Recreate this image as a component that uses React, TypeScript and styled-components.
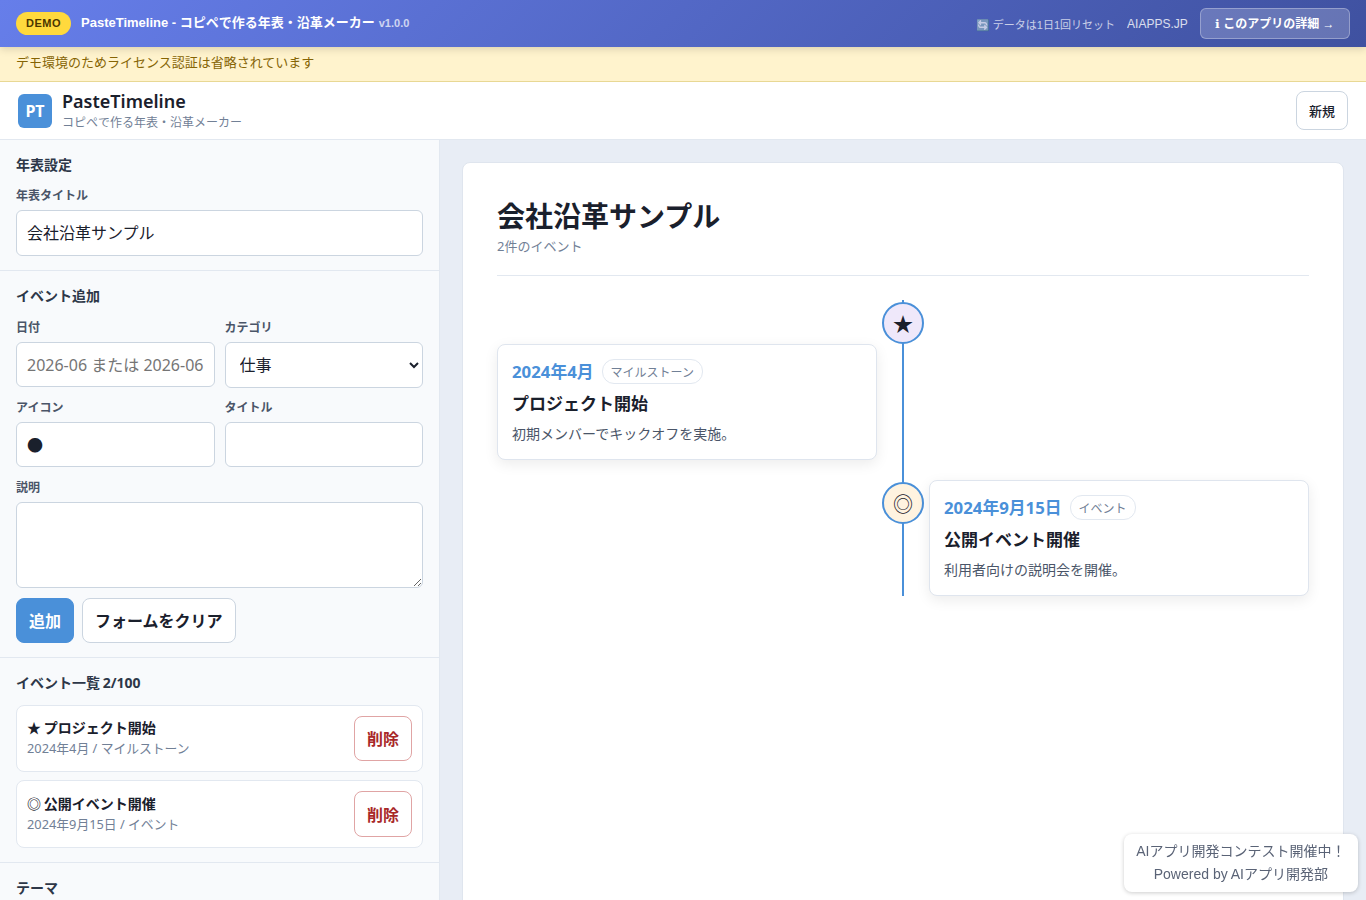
import { createGlobalStyle, styled } from "styled-components";

const APP_FONT = `"Noto Sans", "Noto Sans CJK JP", sans-serif`;
const DEMO_FONT = `"Liberation Sans", "Noto Sans CJK JP", sans-serif`;

const Global = createGlobalStyle`
  * { box-sizing: border-box; }
  html, body { margin: 0; height: 100%; overflow: hidden; }
  body {
    font-family: ${APP_FONT};
    color: #1a202c;
    background: #e8edf5;
  }
`;

const S = {
  Page: styled.div`
    height: 900px;
    display: flex;
    flex-direction: column;
    overflow: hidden;
  `,
  DemoBar: styled.div`
    height: 47px;
    flex: none;
    display: flex;
    align-items: center;
    justify-content: space-between;
    padding: 0 16px;
    font-family: ${DEMO_FONT};
    color: #fff;
    background: linear-gradient(135deg, #667eea 0%, #3f51a0 100%);
    box-shadow: 0 2px 8px rgba(0, 0, 0, 0.15);
    position: relative;
  `,
  DemoLeft: styled.div`
    display: flex;
    align-items: center;
    gap: 10px;
  `,
  DemoBadge: styled.span`
    display: block;
    background: #ffd93d;
    color: #4a3500;
    font-size: 11px;
    font-weight: 700;
    line-height: 13px;
    padding: 5px 10px;
    border-radius: 12px;
    letter-spacing: 0.5px;
  `,
  DemoTitle: styled.span`
    padding-bottom: 5px;
    font-size: 13px;
    font-weight: 600;
  `,
  DemoVersion: styled.span`
    font-size: 11px;
    font-weight: 600;
    opacity: 0.7;
    margin-left: 4px;
  `,
  DemoRight: styled.div`
    display: flex;
    align-items: center;
    gap: 12px;
  `,
  DemoNote: styled.span`
    font-size: 11px;
    opacity: 0.7;
  `,
  DemoLink: styled.a`
    font-size: 12px;
    color: #fff;
    opacity: 0.8;
  `,
  DemoButton: styled.a`
    display: block;
    font-size: 12px;
    font-weight: 600;
    line-height: 17px;
    color: #fff;
    padding: 7px 14.5px 5px;
    border-radius: 6px;
    background: rgba(255, 255, 255, 0.2);
    border: 1px solid rgba(255, 255, 255, 0.3);
  `,
  InfoGlyph: styled.span`
    font-family: "DejaVu Sans", sans-serif;
  `,
  Notice: styled.div`
    height: 35px;
    flex: none;
    padding: 5px 16px 0;
    font-size: 13px;
    color: #856404;
    background: #fff3cd;
    border-bottom: 1px solid #e8d894;
  `,
  Header: styled.header`
    height: 58px;
    flex: none;
    display: flex;
    align-items: center;
    justify-content: space-between;
    padding: 0 18px;
    background: #fff;
    border-bottom: 1px solid #e2e8f0;
  `,
  Brand: styled.div`
    display: flex;
    align-items: center;
    gap: 10px;
  `,
  Logo: styled.div`
    width: 34px;
    height: 34px;
    border-radius: 6px;
    background: #4a90d9;
    color: #fff;
    font-weight: 700;
    font-size: 16px;
    display: flex;
    align-items: center;
    justify-content: center;
  `,
  BrandText: styled.div`
    padding-top: 2px;
  `,
  BrandName: styled.div`
    font-size: 18px;
    font-weight: 600;
    line-height: 22px;
  `,
  BrandSub: styled.div`
    margin-top: 1px;
    font-size: 12px;
    line-height: 20px;
    color: #718096;
  `,
  NewButton: styled.button`
    height: 39px;
    padding: 0 12px;
    font: 500 13px ${APP_FONT};
    color: #1a202c;
    background: #fff;
    border: 1px solid #cbd5e0;
    border-radius: 8px;
  `,
  Body: styled.div`
    flex: 1;
    min-height: 0;
    display: flex;
  `,
  Sidebar: styled.aside`
    width: 440px;
    flex: none;
    background: #f8fafc;
    border-right: 1px solid #e2e8f0;
    overflow: hidden;
  `,
  Section: styled.section`
    padding: 16px 16px 14px;
    border-bottom: 1px solid #e2e8f0;
  `,
  SectionTitle: styled.h2`
    margin: 0 0 13px;
    font-size: 14px;
    font-weight: 700;
    line-height: 18px;
    word-spacing: -1px;
    color: #2d3748;
  `,
  Grid: styled.div`
    display: grid;
    grid-template-columns: 1fr 1fr;
    gap: 12px 10px;
    padding-top: 0.5px;
  `,
  Field: styled.label<{ $full?: boolean }>`
    display: block;
    min-width: 0;
    grid-column: ${(p) => (p.$full ? "1 / -1" : "auto")};
  `,
  Label: styled.span`
    display: block;
    margin-bottom: 5px;
    font-size: 12px;
    font-weight: 600;
    line-height: 18px;
    color: #4a5568;
  `,
  Input: styled.input<{ $tall?: boolean; $pad?: string }>`
    display: block;
    width: 100%;
    height: ${(p) => (p.$tall ? "46px" : "45px")};
    padding: ${(p) => p.$pad ?? "1px 10px 0"};
    font: 16px ${APP_FONT};
    color: #1a202c;
    background: #fff;
    border: 1px solid #cbd5e0;
    border-radius: 6px;
    &::placeholder { color: #757575; }
  `,
  Select: styled.select`
    display: block;
    width: 100%;
    height: 46px;
    margin-bottom: -1px;
    padding: 0 10px;
    font: 16px ${APP_FONT};
    color: #1a202c;
    background: #fff;
    border: 1px solid #cbd5e0;
    border-radius: 6px;
  `,
  TextArea: styled.textarea`
    display: block;
    width: 100%;
    height: 86px;
    padding: 10px;
    font: 16px ${APP_FONT};
    background: #fff;
    border: 1px solid #cbd5e0;
    border-radius: 6px;
  `,
  Actions: styled.div`
    display: flex;
    gap: 8px;
    margin-top: 10px;
  `,
  Button: styled.button<{ $primary?: boolean }>`
    height: 45px;
    padding: 0 12px;
    font: 600 16px ${APP_FONT};
    color: ${(p) => (p.$primary ? "#fff" : "#1a202c")};
    background: ${(p) => (p.$primary ? "#4a90d9" : "#fff")};
    border: 1px solid ${(p) => (p.$primary ? "#4a90d9" : "#cbd5e0")};
    border-radius: 8px;
  `,
  EventList: styled.div`
    display: flex;
    flex-direction: column;
    gap: 8px;
  `,
  EventRow: styled.div`
    display: flex;
    align-items: center;
    justify-content: space-between;
    padding: 10px;
    background: #fff;
    border: 1px solid #e2e8f0;
    border-radius: 8px;
  `,
  EventName: styled.div`
    font-size: 14px;
    font-weight: 600;
    line-height: 20px;
    word-spacing: -1px;
  `,
  EventMeta: styled.div`
    font-size: 12.8px;
    line-height: 20px;
    color: #718096;
  `,
  DeleteButton: styled.button`
    height: 45.5px;
    padding: 0 12px;
    font: 600 16px ${APP_FONT};
    color: #a82828;
    background: #fff;
    border: 1px solid #e0a4a4;
    border-radius: 8px;
  `,
  Main: styled.main`
    flex: 1;
    min-width: 0;
    padding: 22px 22px 0;
  `,
  Canvas: styled.div`
    min-height: 900px;
    padding: 34px;
    background: #fff;
    border: 1px solid #dfe5ee;
    border-radius: 8px;
  `,
  CanvasTitle: styled.h1`
    margin: 1px 0 0;
    font-size: 28px;
    font-weight: 700;
    line-height: 36px;
    color: #1a202c;
  `,
  CanvasCount: styled.div`
    margin-top: 3px;
    padding-bottom: 19px;
    font-size: 13px;
    line-height: 19px;
    color: #718096;
    border-bottom: 1px solid #e2e8f0;
  `,
  Timeline: styled.div`
    position: relative;
    margin-top: 24px;
    display: flex;
    flex-direction: column;
    gap: 20px;
    &::before {
      content: "";
      position: absolute;
      left: 405px;
      top: 0;
      bottom: 0;
      width: 2px;
      background: #4a90d9;
    }
  `,
  Item: styled.div`
    position: relative;
    display: grid;
    grid-template-columns: 380px 52px 380px;
  `,
  Marker: styled.div<{ $bg: string }>`
    grid-column: 2;
    justify-self: center;
    width: 42px;
    height: 42px;
    margin-top: 2px;
    display: flex;
    align-items: center;
    justify-content: center;
    font-size: 20px;
    border-radius: 50%;
    border: 2px solid #4a90d9;
    background: ${(p) => p.$bg};
  `,
  Card: styled.article<{ $side: "left" | "right" }>`
    grid-column: ${(p) => (p.$side === "left" ? 1 : 3)};
    height: 116px;
    padding: 14px;
    background: #fff;
    border: 1px solid #dfe5ee;
    border-radius: 8px;
    box-shadow: 0 4px 14px rgba(0, 0, 0, 0.08);
  `,
  CardHead: styled.div`
    display: flex;
    align-items: center;
    gap: 8px;
  `,
  CardDate: styled.span`
    padding-bottom: 1px;
    font-size: 16.8px;
    font-weight: 700;
    line-height: 23px;
    color: #4a90d9;
  `,
  Tag: styled.span`
    padding: 3px 8px 1px;
    font-size: 12px;
    line-height: 19px;
    color: #718096;
    border: 1px solid #e2e8f0;
    border-radius: 12px;
  `,
  CardTitle: styled.div`
    margin-top: 7px;
    font-size: 17px;
    font-weight: 700;
    line-height: 26px;
  `,
  CardText: styled.div`
    margin-top: 6px;
    font-size: 14px;
    line-height: 21px;
    color: #4a5568;
  `,
  Promo: styled.div`
    position: fixed;
    right: 8px;
    bottom: 8px;
    padding: 6px 12.5px;
    font-family: ${DEMO_FONT};
    font-size: 14px;
    line-height: 23px;
    text-align: center;
    color: #5a6376;
    background: #fff;
    border-radius: 8px;
    box-shadow: 0 1px 4px rgba(0, 0, 0, 0.2);
  `,
};

const events = [
  { icon: "★", date: "2024年4月", tag: "マイルストーン", title: "プロジェクト開始", text: "初期メンバーでキックオフを実施。", side: "left", bg: "#efe8fa" },
  { icon: "◎", date: "2024年9月15日", tag: "イベント", title: "公開イベント開催", text: "利用者向けの説明会を開催。", side: "right", bg: "#fff3e0" },
] as const;

const App = () => {
  return (
    <S.Page>
      <Global />
      <S.DemoBar>
        <S.DemoLeft>
          <S.DemoBadge>DEMO</S.DemoBadge>
          <S.DemoTitle>
            PasteTimeline - コピペで作る年表・沿革メーカー<S.DemoVersion>v1.0.0</S.DemoVersion>
          </S.DemoTitle>
        </S.DemoLeft>
        <S.DemoRight>
          <S.DemoNote>🔄 データは1日1回リセット</S.DemoNote>
          <S.DemoLink>AIAPPS.JP</S.DemoLink>
          <S.DemoButton><S.InfoGlyph>ℹ</S.InfoGlyph> このアプリの詳細 →</S.DemoButton>
        </S.DemoRight>
      </S.DemoBar>
      <S.Notice>デモ環境のためライセンス認証は省略されています</S.Notice>
      <S.Header>
        <S.Brand>
          <S.Logo>PT</S.Logo>
          <S.BrandText>
            <S.BrandName>PasteTimeline</S.BrandName>
            <S.BrandSub>コピペで作る年表・沿革メーカー</S.BrandSub>
          </S.BrandText>
        </S.Brand>
        <S.NewButton>新規</S.NewButton>
      </S.Header>
      <S.Body>
        <S.Sidebar>
          <S.Section>
            <S.SectionTitle>年表設定</S.SectionTitle>
            <S.Field>
              <S.Label>年表タイトル</S.Label>
              <S.Input $tall $pad="0 10px 2px" defaultValue="会社沿革サンプル" />
            </S.Field>
          </S.Section>
          <S.Section>
            <S.SectionTitle>イベント追加</S.SectionTitle>
            <S.Grid>
              <S.Field>
                <S.Label>日付</S.Label>
                <S.Input placeholder="2026-06 または 2026-06" />
              </S.Field>
              <S.Field>
                <S.Label>カテゴリ</S.Label>
                <S.Select defaultValue="仕事">
                  <option>仕事</option>
                </S.Select>
              </S.Field>
              <S.Field>
                <S.Label>アイコン</S.Label>
                <S.Input $pad="0 10px" defaultValue="●" />
              </S.Field>
              <S.Field>
                <S.Label>タイトル</S.Label>
                <S.Input />
              </S.Field>
              <S.Field $full>
                <S.Label>説明</S.Label>
                <S.TextArea />
              </S.Field>
            </S.Grid>
            <S.Actions>
              <S.Button $primary>追加</S.Button>
              <S.Button>フォームをクリア</S.Button>
            </S.Actions>
          </S.Section>
          <S.Section>
            <S.SectionTitle>イベント一覧 2/100</S.SectionTitle>
            <S.EventList>
              {events.map((e) => (
                <S.EventRow key={e.title}>
                  <div>
                    <S.EventName>{e.icon} {e.title}</S.EventName>
                    <S.EventMeta>{e.date} / {e.tag}</S.EventMeta>
                  </div>
                  <S.DeleteButton>削除</S.DeleteButton>
                </S.EventRow>
              ))}
            </S.EventList>
          </S.Section>
          <S.Section>
            <S.SectionTitle>テーマ</S.SectionTitle>
          </S.Section>
        </S.Sidebar>
        <S.Main>
          <S.Canvas>
            <S.CanvasTitle>会社沿革サンプル</S.CanvasTitle>
            <S.CanvasCount>2件のイベント</S.CanvasCount>
            <S.Timeline>
              {events.map((e) => (
                <S.Item key={e.title}>
                  <S.Marker $bg={e.bg}>{e.icon}</S.Marker>
                  <S.Card $side={e.side}>
                    <S.CardHead>
                      <S.CardDate>{e.date}</S.CardDate>
                      <S.Tag>{e.tag}</S.Tag>
                    </S.CardHead>
                    <S.CardTitle>{e.title}</S.CardTitle>
                    <S.CardText>{e.text}</S.CardText>
                  </S.Card>
                </S.Item>
              ))}
            </S.Timeline>
          </S.Canvas>
        </S.Main>
      </S.Body>
      <S.Promo>
        AIアプリ開発コンテスト開催中！
        <br />
        Powered by AIアプリ開発部
      </S.Promo>
    </S.Page>
  );
};

export default App;
